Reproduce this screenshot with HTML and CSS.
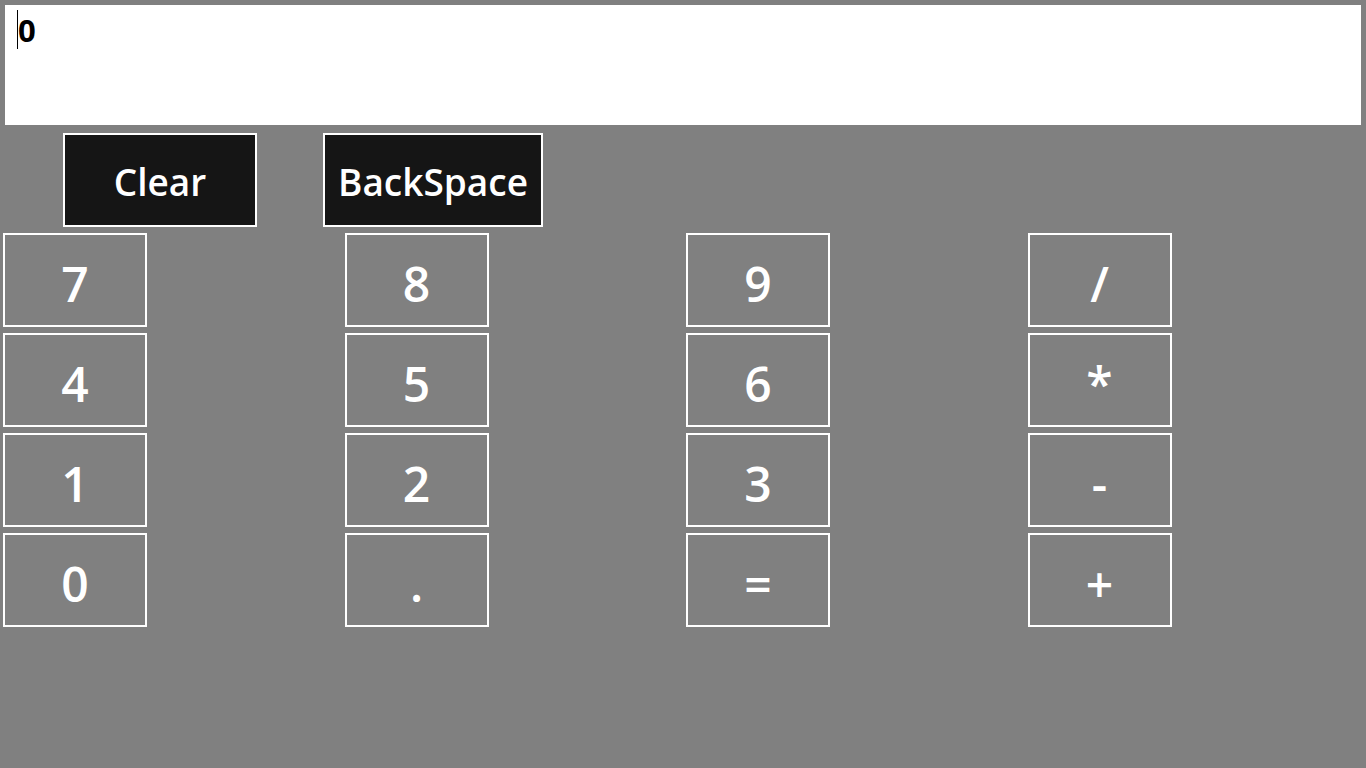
FILE: index.html
```html
<!DOCTYPE html>
<html lang="en">
<head>
    <meta charset="UTF-8">
    <meta name="viewport" content="width=device-width, initial-scale=1.0">
    <title>Calculator</title>
    <link rel="stylesheet" href="styles.css">
</head>
<body>
    <div class="display"><span class="caret"></span><span class="display-value">0</span></div>

    <div class="actions">
        <button class="action-btn clear">Clear</button>
        <button class="action-btn backspace">BackSpace</button>
    </div>

    <div class="keypad">
        <div class="cell"><button class="key">7</button></div>
        <div class="cell"><button class="key">8</button></div>
        <div class="cell"><button class="key">9</button></div>
        <div class="cell"><button class="key">/</button></div>

        <div class="cell"><button class="key">4</button></div>
        <div class="cell"><button class="key">5</button></div>
        <div class="cell"><button class="key">6</button></div>
        <div class="cell"><button class="key">*</button></div>

        <div class="cell"><button class="key">1</button></div>
        <div class="cell"><button class="key">2</button></div>
        <div class="cell"><button class="key">3</button></div>
        <div class="cell"><button class="key">-</button></div>

        <div class="cell"><button class="key">0</button></div>
        <div class="cell"><button class="key">.</button></div>
        <div class="cell"><button class="key">=</button></div>
        <div class="cell"><button class="key">+</button></div>
    </div>
</body>
</html>
```

FILE: styles.css
```css
body {
  margin: 0;
  height: 100vh;
  background-color: #808080;
  font-family: "Open Sans", "Noto Sans", sans-serif;
  overflow: hidden;
}

.display {
  margin: 5px;
  height: 120px;
  box-sizing: border-box;
  background: #ffffff;
  padding: 5px 0 0 12px;
  display: flex;
  align-items: flex-start;
}

.caret {
  width: 1px;
  height: 39px;
  background: #000000;
}

.display-value {
  font-size: 31px;
  font-weight: 700;
  line-height: 46px;
  color: #000000;
  margin-top: -3px;
}

.actions {
  display: flex;
  gap: 66px;
  padding-left: 63px;
  margin-top: 8px;
}

.action-btn {
  height: 94px;
  box-sizing: border-box;
  background: #151515;
  border: 2px solid #ffffff;
  color: #ffffff;
  font-family: inherit;
  font-size: 37px;
  font-weight: 600;
  padding: 3px 0 0 0;
}

.action-btn.clear {
  width: 194px;
}

.action-btn.backspace {
  width: 220px;
}

.keypad {
  display: grid;
  grid-template-columns: repeat(4, 1fr);
  grid-auto-rows: 100px;
  margin-top: 3px;
}

.cell {
  padding: 3px;
}

.key {
  width: 144px;
  height: 94px;
  box-sizing: border-box;
  background: transparent;
  border: 2px solid #ffffff;
  color: #ffffff;
  font-family: inherit;
  font-size: 48px;
  font-weight: 600;
  padding: 6px 0 0 0;
}
```
